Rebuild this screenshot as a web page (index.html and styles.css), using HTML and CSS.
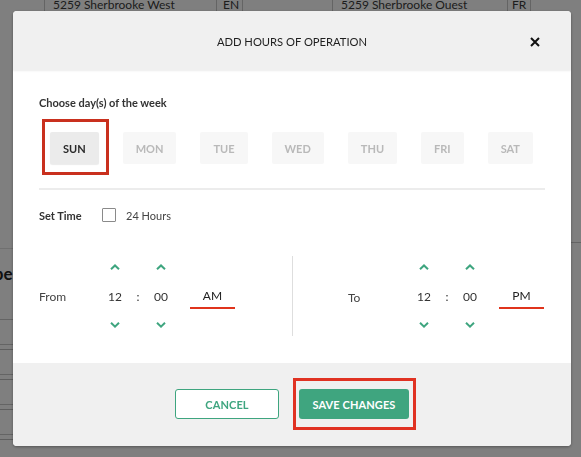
FILE: index.html
```html
<!DOCTYPE html>
<html lang="en">
<head>
<meta charset="utf-8">
<title>Add hours of operation</title>
<link rel="stylesheet" href="styles.css">
</head>
<body>
<div class="page">
  <div class="toprow">
    <div class="cell c1">5259 Sherbrooke West</div>
    <div class="cell c2">EN</div>
    <div class="cell c3"></div>
    <div class="cell c4">5259 Sherbrooke Ouest</div>
    <div class="cell c5">FR</div>
  </div>
  <div class="sides">
    <div class="leftstrip">
      <div class="r ra"></div>
      <div class="r rb"><span class="heading">Type</span></div>
      <div class="r rc"></div>
      <div class="r rd"></div>
      <div class="r rc"></div>
      <div class="r rd"></div>
      <div class="r rc"></div>
      <div class="r rd"></div>
      <div class="r rc"></div>
      <div class="r rd"></div>
      <div class="r rc"></div>
      <div class="r rd"></div>
    </div>
    <div class="rightstrip">
      <div class="r rr"></div>
    </div>
  </div>
</div>

<div class="overlay">
  <div class="modal">
    <div class="modal-header">
      <span></span>
      <h1 class="title">ADD HOURS OF OPERATION</h1>
      <button class="close" aria-label="Close">
        <svg width="10" height="10" viewBox="0 0 10 10"><path d="M1 1 L9 9 M9 1 L1 9" stroke="#111" stroke-width="2" fill="none"/></svg>
      </button>
    </div>

    <div class="modal-body">
      <div class="label">Choose day(s) of the week</div>
      <div class="days">
        <button class="day active marked">SUN</button>
        <button class="day">MON</button>
        <button class="day">TUE</button>
        <button class="day">WED</button>
        <button class="day">THU</button>
        <button class="day">FRI</button>
        <button class="day">SAT</button>
      </div>
      <div class="divider"></div>
      <div class="settime">
        <span class="label-inline">Set Time</span>
        <span class="checkbox"></span>
        <span class="check-label">24 Hours</span>
      </div>
      <div class="times">
        <div class="group">
          <span class="tlabel">From</span>
          <div class="picker">
            <span class="arrow"><svg width="10" height="6" viewBox="0 0 10 6"><polyline points="1,5.2 5,1.4 9,5.2" fill="none" stroke="#3ea57f" stroke-width="2"/></svg></span>
            <span class="num">12</span>
            <span class="arrow"><svg width="10" height="6" viewBox="0 0 10 6"><polyline points="1,0.8 5,4.6 9,0.8" fill="none" stroke="#3ea57f" stroke-width="2"/></svg></span>
          </div>
          <span class="colon">:</span>
          <div class="picker">
            <span class="arrow"><svg width="10" height="6" viewBox="0 0 10 6"><polyline points="1,5.2 5,1.4 9,5.2" fill="none" stroke="#3ea57f" stroke-width="2"/></svg></span>
            <span class="num">00</span>
            <span class="arrow"><svg width="10" height="6" viewBox="0 0 10 6"><polyline points="1,0.8 5,4.6 9,0.8" fill="none" stroke="#3ea57f" stroke-width="2"/></svg></span>
          </div>
          <span class="ampm">AM</span>
        </div>
        <div class="vline"></div>
        <div class="group end">
          <span class="tlabel to">To</span>
          <div class="picker">
            <span class="arrow"><svg width="10" height="6" viewBox="0 0 10 6"><polyline points="1,5.2 5,1.4 9,5.2" fill="none" stroke="#3ea57f" stroke-width="2"/></svg></span>
            <span class="num">12</span>
            <span class="arrow"><svg width="10" height="6" viewBox="0 0 10 6"><polyline points="1,0.8 5,4.6 9,0.8" fill="none" stroke="#3ea57f" stroke-width="2"/></svg></span>
          </div>
          <span class="colon">:</span>
          <div class="picker">
            <span class="arrow"><svg width="10" height="6" viewBox="0 0 10 6"><polyline points="1,5.2 5,1.4 9,5.2" fill="none" stroke="#3ea57f" stroke-width="2"/></svg></span>
            <span class="num">00</span>
            <span class="arrow"><svg width="10" height="6" viewBox="0 0 10 6"><polyline points="1,0.8 5,4.6 9,0.8" fill="none" stroke="#3ea57f" stroke-width="2"/></svg></span>
          </div>
          <span class="ampm">PM</span>
        </div>
      </div>
    </div>

    <div class="modal-footer">
      <button class="btn cancel">CANCEL</button>
      <button class="btn save marked-save">SAVE CHANGES</button>
    </div>
  </div>
</div>
</body>
</html>
```

FILE: styles.css
```css
* { box-sizing: border-box; }

html, body {
  margin: 0;
  padding: 0;
  width: 581px;
  height: 457px;
  overflow: hidden;
}

body {
  background: #ffffff;
  font-family: Lato, "Open Sans", sans-serif;
  color: #333;
}

/* ---------- background page ---------- */
.page {
  width: 581px;
  height: 457px;
}

.toprow {
  display: flex;
  height: 14px;
  margin-top: -2px;
  padding-left: 44px;
  font-size: 12px;
  color: #3a3a3a;
}

.cell {
  border-left: 1px solid #c8c8c8;
  border-right: 1px solid #c8c8c8;
  line-height: 13px;
  padding-top: 0;
  padding-left: 8px;
  white-space: nowrap;
}
.c1 { width: 172px; border-right: none; }
.c2 { width: 27px; padding-left: 6px; }
.c3 { width: 89px; border: none; }
.c4 { width: 175px; border-right: none; }
.c5 { width: 24px; padding-left: 4px; }

.sides {
  display: flex;
  justify-content: space-between;
}

.leftstrip {
  width: 13px;
  overflow: hidden;
}
.rightstrip {
  width: 10px;
}

.r { border-bottom: 1px solid #c8c8c8; }
.ra { height: 237px; border-bottom-color: #e0e0e0; }
.rb { height: 57px; position: relative; }
.rc { height: 25px; }
.rd { height: 5px; border-bottom-color: #bdbdbd; }
.rr { height: 231px; }

.heading {
  display: block;
  font-size: 17px;
  font-weight: 700;
  color: #222;
  margin-left: -24px;
  margin-top: 14px;
  white-space: nowrap;
}

/* ---------- overlay / modal ---------- */
.overlay {
  position: fixed;
  inset: 0;
  background: rgba(0, 0, 0, 0.5);
}

.modal {
  width: 558px;
  margin: 11px 0 0 13px;
  background: #fff;
  border-radius: 4px;
  box-shadow: 0 1px 3px rgba(0, 0, 0, 0.35);
}

.modal-header {
  height: 59px;
  background: #f0f0f0;
  border-radius: 4px 4px 0 0;
  display: grid;
  grid-template-columns: 1fr auto 1fr;
  align-items: center;
  box-shadow: 0 1px 2px rgba(0, 0, 0, 0.08);
  position: relative;
}

.title {
  margin: 0;
  font-size: 11.2px;
  font-weight: 400;
  color: #1e1e1e;
  letter-spacing: 0;
  line-height: 14px;
  padding-top: 2px;
}

.close {
  justify-self: end;
  margin-right: 30px;
  width: 12px;
  height: 12px;
  padding: 0;
  border: none;
  background: transparent;
  display: flex;
  align-items: center;
  justify-content: center;
  margin-top: 2px;
}

.modal-body {
  padding: 26px;
  height: 293px;
}

.label {
  font-size: 11px;
  font-weight: 700;
  color: #333;
  line-height: 14px;
}

.days {
  display: flex;
  gap: 24px;
  margin-top: 22px;
  padding-left: 11px;
}

.day {
  height: 32px;
  padding: 0 13px;
  border: none;
  border-radius: 2px;
  background: #f7f7f7;
  color: #b9b9b9;
  font-family: inherit;
  font-size: 11px;
  font-weight: 700;
  letter-spacing: 0;
}

.day.active {
  background: #ebebeb;
  color: #2a2a2a;
  box-shadow: 0 1px 1px rgba(0, 0, 0, 0.08);
}

.marked { position: relative; }
.marked::after {
  content: "";
  position: absolute;
  top: -13px;
  right: -10px;
  bottom: -11px;
  left: -8px;
  border: 3px solid #c9301e;
}

.divider {
  height: 2px;
  background: #ececec;
  margin-top: 24px;
}

.settime {
  display: flex;
  align-items: center;
  margin-top: 18px;
  height: 14px;
}

.label-inline {
  font-size: 11px;
  font-weight: 700;
  color: #333;
  width: 63px;
}

.checkbox {
  width: 14px;
  height: 14px;
  border: 1px solid #8a8a8a;
  border-radius: 1px;
  background: #fff;
}

.check-label {
  margin-left: 10px;
  font-size: 11px;
  color: #444;
}

.times {
  display: grid;
  grid-template-columns: 1fr 1px 1fr;
  margin-top: 34px;
  height: 80px;
}

.vline { background: #dedede; }

.group {
  display: flex;
  align-items: center;
}
.group.end {
  justify-content: flex-end;
  padding-right: 1px;
}

.tlabel {
  width: 64px;
  font-size: 12px;
  color: #444;
}
.tlabel.to { padding-top: 3px; }

.picker {
  width: 24px;
  display: flex;
  flex-direction: column;
  align-items: center;
}

.arrow {
  height: 22px;
  display: flex;
  align-items: center;
  justify-content: center;
}

.num {
  height: 36px;
  display: flex;
  align-items: center;
  font-size: 12px;
  color: #333;
}

.colon {
  width: 22px;
  text-align: center;
  font-size: 12px;
  color: #333;
}

.ampm {
  width: 45px;
  margin-left: 17px;
  text-align: center;
  font-size: 12px;
  color: #222;
  line-height: 16px;
  padding-top: 5px;
  padding-bottom: 3px;
  border-bottom: 2px solid #e0341c;
}

.modal-footer {
  height: 83px;
  background: #f0f0f0;
  border-radius: 0 0 4px 4px;
  display: flex;
  justify-content: center;
  align-items: flex-start;
  gap: 20px;
  padding-top: 26px;
}

.btn {
  height: 30px;
  border-radius: 3px;
  font-family: inherit;
  font-size: 11px;
  font-weight: 700;
  letter-spacing: 0.1px;
}

.cancel {
  width: 104px;
  background: #fff;
  border: 1px solid #3ea57f;
  color: #3ea57f;
}

.save {
  width: 110px;
  background: #3fa57f;
  border: none;
  color: #fff;
}

.marked-save { position: relative; }
.marked-save::after {
  content: "";
  position: absolute;
  top: -11px;
  right: -7px;
  bottom: -11px;
  left: -6px;
  border: 3px solid #e03222;
}
```
